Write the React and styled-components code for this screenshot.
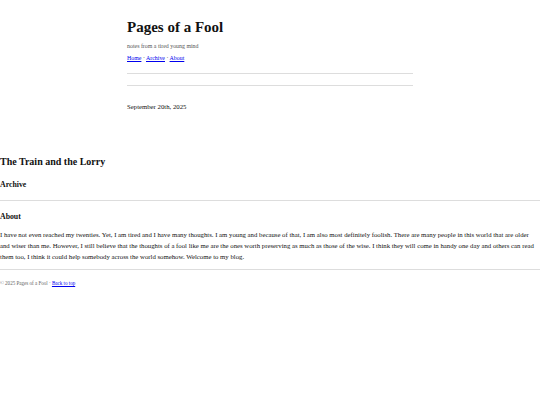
import React from 'react';
import styled, { createGlobalStyle } from 'styled-components';

const GlobalStyle = createGlobalStyle`
  html, body {
    margin: 0;
    padding: 0;
    background: #fff;
  }
  body {
    font-family: 'Liberation Serif', 'Times New Roman', serif;
    font-size: 6.75px;
    line-height: 1.55;
    color: #111;
  }
`;

const Header = styled.header`
  width: 286px;
  margin: 0 auto;
  padding-top: 18px;
`;

const SiteTitle = styled.h1`
  font-size: 15px;
  line-height: 1.2;
  font-weight: bold;
  margin: 0 0 6px;
`;

const Tagline = styled.p`
  font-size: 5.9px;
  color: #555;
  margin: 0 0 3px;
`;

const Nav = styled.nav`
  font-size: 5.9px;
  a {
    color: #0000ee;
    text-decoration: underline;
  }
`;

const Rule = styled.hr`
  border: 0;
  border-top: 1px solid #ddd;
  margin: ${p => p.$gap || '11px'} 0 0;
`;

const Meta = styled.div`
  width: 286px;
  margin: 0 auto;
  padding-top: 16px;
`;

const PostTitle = styled.h2`
  font-size: 10px;
  line-height: 1.2;
  margin: 43px 0 0;
`;

const SectionTitle = styled.h3`
  font-size: 7.8px;
  line-height: 1.2;
  margin: ${p => p.$top || '14px'} 0 0;
`;

const Text = styled.p`
  margin: 9px 0 0;
  line-height: 1.6;
`;

const Footer = styled.footer`
  font-size: 5.05px;
  color: #666;
  margin-top: 10px;
  a {
    color: #0000ee;
  }
`;

export default function App() {
  return (
    <>
      <GlobalStyle />
      <Header>
        <SiteTitle>Pages of a Fool</SiteTitle>
        <Tagline>notes from a tired young mind</Tagline>
        <Nav>
          <a href="#">Home</a> · <a href="#">Archive</a> · <a href="#">About</a>
        </Nav>
        <Rule $gap="10px" />
        <Rule $gap="11px" />
      </Header>
      <Meta>September 20th, 2025</Meta>
      <PostTitle>The Train and the Lorry</PostTitle>
      <SectionTitle $top="12px">Archive</SectionTitle>
      <Rule $gap="11px" />
      <SectionTitle $top="11px">About</SectionTitle>
      <Text>
        I have not even reached my twenties. Yet, I am tired and I have many thoughts. I am young and because of that, I am also most definitely foolish. There are many people in this world that are older and wiser than me. However, I still believe that the thoughts of a fool like me are the ones worth preserving as much as those of the wise. I think they will come in handy one day and others can read them too, I think it could help somebody across the world somehow. Welcome to my blog.
      </Text>
      <Rule $gap="6px" />
      <Footer>
        © 2025 Pages of a Fool · <a href="#top">Back to top</a>
      </Footer>
    </>
  );
}
